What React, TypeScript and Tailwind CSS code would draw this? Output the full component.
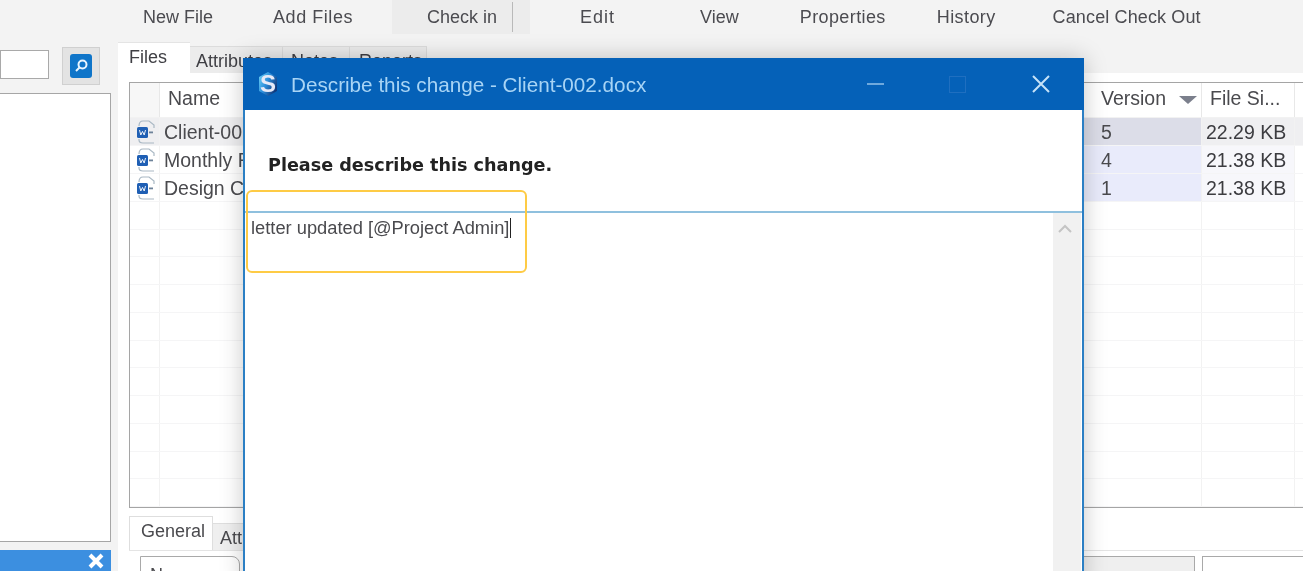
import React from "react";

const toolbar = [
  { label: "New File", cls: "ml-[143px]" },
  { label: "Add Files", cls: "ml-[60px] tracking-[0.55px]" },
  { label: "Edit", cls: "ml-[50px] tracking-[1px]" },
  { label: "View", cls: "ml-[85px]" },
  { label: "Properties", cls: "ml-[61px] tracking-[0.4px]" },
  { label: "History", cls: "ml-[51px] tracking-[0.4px]" },
  { label: "Cancel Check Out", cls: "ml-[57px] tracking-[0.13px]" },
];

const files = [
  { name: "Client-002.docx", version: "5", size: "22.29 KB" },
  { name: "Monthly Report.docx", version: "4", size: "21.38 KB" },
  { name: "Design Contract.docx", version: "1", size: "21.38 KB" },
];

function WordIcon() {
  return (
    <svg width="20" height="24" viewBox="0 0 20 24" className="ml-[5px] shrink-0">
      <path d="M4 6Q4 1 8 1H14L19 5V8" fill="none" stroke="#a9b8c4" strokeWidth="1.2" />
      <path d="M4 19V20Q4 23 8 23H19" fill="none" stroke="#a9b8c4" strokeWidth="1.2" />
      <rect x="2" y="7" width="11" height="11" rx="1.5" fill="#1f5fb4" />
      <path d="M4.5 10l1.3 5 1.7-3.6 1.7 3.6 1.3-5" fill="none" stroke="#fff" strokeWidth="0.9" />
      <rect x="14" y="11.5" width="4" height="1.8" fill="#6d8299" />
    </svg>
  );
}

function Logo() {
  return (
    <div className="relative flex h-[28px] w-[22px] shrink-0 items-center justify-center">
      <svg width="22" height="28" viewBox="0 0 22 28" className="absolute inset-0">
        <defs>
          <linearGradient id="lg" x1="0" y1="0" x2="1" y2="0.6">
            <stop offset="0" stopColor="#6fd6f7" />
            <stop offset="0.5" stopColor="#2d8fdc" />
            <stop offset="1" stopColor="#123a7c" />
          </linearGradient>
        </defs>
        <path d="M11 2l9 5v14l-9 5-9-5V7z" fill="url(#lg)" />
      </svg>
      <span className="relative text-[24px] font-bold leading-none text-[#e6e9f7]">S</span>
    </div>
  );
}

function Row({ file, index }: { file?: (typeof files)[number]; index: number }) {
  const first = index === 0;
  return (
    <div className={`flex h-[28px] border-b border-[#f5f5f6] text-[19.5px] leading-[29px] ${first ? "bg-[#efeff1]" : ""}`}>
      <div className="flex w-[30px] shrink-0 items-center border-r border-[#f2f2f2]">{file && <WordIcon />}</div>
      <div className="min-w-0 flex-1 overflow-hidden whitespace-nowrap pl-[4px] text-[#4a4a4e]">
        {file?.name}
      </div>
      <div
        className={`w-[118px] shrink-0 border-r border-[#f2f2f2] pl-[17px] text-[#4a4a4e] ${
          file ? (first ? "bg-[#dcdde8]" : "bg-[#e9ebfb]") : ""
        }`}
      >
        {file?.version}
      </div>
      <div
        className={`w-[93px] shrink-0 border-r border-[#f2f2f2] pl-[4px] text-[#3c3c40] ${
          file && !first ? "bg-[#f7f7fb]" : ""
        }`}
      >
        {file?.size}
      </div>
      <div className="w-[8px] shrink-0" />
    </div>
  );
}

export default function App() {
  return (
    <div className="relative h-[571px] w-[1303px] overflow-hidden bg-[#f3f3f3] font-['Liberation_Sans',Arial,sans-serif] blur-[0.5px]">
      {/* Toolbar */}
      <div className="flex h-[38px] items-center pb-[4px] text-[18px] text-[#4b4b50]">
        <span className={toolbar[0].cls}>{toolbar[0].label}</span>
        <span className={toolbar[1].cls}>{toolbar[1].label}</span>
        <div className="ml-[39px] flex h-[34px] w-[138px] items-center bg-[#ececec] pl-[35px]">
          <span>Check in</span>
          <span className="ml-[15px] h-[30px] w-px bg-[#b9b9b9]" />
        </div>
        {toolbar.slice(2).map((t) => (
          <span key={t.label} className={t.cls}>
            {t.label}
          </span>
        ))}
      </div>

      <div className="flex h-[533px]">
        {/* Left pane */}
        <div className="flex w-[118px] shrink-0 flex-col pr-[7px]">
          <div className="flex h-[55px] shrink-0 items-start pt-[9px]">
            <div className="mt-[3px] h-[29px] w-[49px] border border-[#a9a9a9] bg-white" />
            <div className="ml-[13px] flex h-[38px] w-[38px] items-center justify-center border border-[#d0d0d0] bg-[#e3e3e3]">
              <div className="flex h-[24px] w-[22px] items-center justify-center rounded-[3px] bg-[#0f75c9]">
                <svg width="16" height="16" viewBox="0 0 16 16" fill="none" stroke="#e8f5ff" strokeWidth="2">
                  <circle cx="9.5" cy="6.5" r="4" />
                  <path d="M6.5 9.5L3 13" />
                </svg>
              </div>
            </div>
          </div>
          <div className="h-[449px] shrink-0 border border-l-0 border-[#a6a6a6] bg-white" />
          <div className="mt-[8px] flex flex-1 items-start justify-end bg-[#3c8fe0] pr-[6px] pt-[2px]">
            <svg width="18" height="18" viewBox="0 0 18 18" stroke="#fff" strokeWidth="4">
              <path d="M3 3l12 12M15 3L3 15" />
            </svg>
          </div>
        </div>

        {/* Right pane */}
        <div className="flex min-w-0 flex-1 flex-col">
          <div className="flex h-[35px] shrink-0 items-end text-[18px] text-[#3f3f44]">
            <div className="h-[31px] w-[72px] border-t border-[#e4e4e4] bg-white pl-[11px] leading-[28px]">Files</div>
            <div className="h-[27px] w-[93px] border-t border-r border-[#dcdcdc] bg-[#ececec] pl-[6px] leading-[29px]">Attributes</div>
            <div className="h-[27px] w-[67px] border-t border-r border-[#dcdcdc] bg-[#ececec] pl-[8px] leading-[29px]">Notes</div>
            <div className="h-[27px] w-[77px] border-t border-r border-[#dcdcdc] bg-[#ececec] pl-[9px] leading-[29px]">Reports</div>
          </div>
          <div className="flex-1 overflow-hidden bg-white pl-[11px] pt-[9px]">
            <div className="flex h-[426px] flex-col overflow-hidden border border-r-0 border-[#a5a5a5] bg-white">
              <div className="flex h-[35px] shrink-0 border-b border-[#f2f2f2] text-[19.5px] leading-[30px] text-[#4a4a4e]">
                <div className="w-[30px] shrink-0 border-r border-[#e8e8e8] bg-[#f7f7f7]" />
                <div className="flex-1 pl-[8px]">Name</div>
                <div className="flex w-[118px] shrink-0 items-center border-r border-[#e8e8e8] pb-[4px] pl-[17px]">
                  Version
                  <svg width="18" height="8" viewBox="0 0 18 8" className="ml-[13px] mt-[3px]">
                    <path d="M0 0h18L9 8z" fill="#7b7f8c" />
                  </svg>
                </div>
                <div className="w-[93px] shrink-0 border-r border-[#e8e8e8] pl-[8px]">File Si...</div>
                <div className="w-[8px] shrink-0" />
              </div>
              {Array.from({ length: 14 }).map((_, i) => (
                <Row key={i} index={i} file={files[i]} />
              ))}
            </div>
            <div className="mt-[8px] flex h-[34px] items-end text-[18px] text-[#4a4a4e]">
              <div className="h-[34px] w-[84px] border-t border-l border-r border-[#dedede] bg-white pl-[11px] leading-[28px]">General</div>
              <div className="h-[27px] w-[80px] border-t border-r border-[#dedede] bg-[#efefef] pl-[7px] leading-[28px]">Attributes</div>
            </div>
            <div className="flex items-start border-t border-[#e4e4e4] pl-[11px] pt-[5px]">
              <div className="h-[30px] w-[100px] rounded-tr-[8px] border border-[#a9a9a9] bg-white pl-[9px] text-[18px] leading-[36px] text-[#4a4a4e]">Name</div>
              <div className="ml-auto flex h-[30px] w-[113px] items-end justify-end border border-[#a9a9a9] bg-[#efefef] pr-[15px]">
                <span className="h-[3px] w-[6px] rounded-t-full bg-[#333]" />
              </div>
              <div className="ml-[7px] h-[30px] w-[101px] border border-r-0 border-[#a9a9a9] bg-white" />
            </div>
          </div>
        </div>
      </div>

      {/* Dialog */}
      <div className="absolute left-[243px] top-[58px] flex h-[530px] w-[841px] flex-col border-x-2 border-[#2b7fc4] bg-white shadow-[0_0_22px_rgba(0,0,0,0.22)]">
        <div className="-mx-[2px] flex h-[52px] shrink-0 items-center bg-[#0561b8] pl-[14px] text-[#a8d4f5]">
          <Logo />
          <span className="ml-[12px] pt-[1px] text-[20.7px]">Describe this change - Client-002.docx</span>
          <span className="ml-auto h-[2px] w-[17px] bg-[#6fa9dd]" />
          <span className="ml-[65px] h-[17px] w-[17px] border border-[#1f6fc0]" />
          <svg width="18" height="18" viewBox="0 0 18 18" stroke="#c6e2f8" strokeWidth="2" className="ml-[66px] mr-[34px]">
            <path d="M1 1l16 16M17 1L1 17" />
          </svg>
        </div>
        <div className="flex h-[103px] shrink-0 items-start border-b-2 border-[#8fc0de] pl-[23px] pt-[43px]">
          <span className="font-['DejaVu_Sans',sans-serif] text-[17.6px] font-bold leading-[24px] text-[#222]">
            Please describe this change.
          </span>
        </div>
        <div className="flex flex-1">
          <div className="flex-1 pl-[6px] pt-[1px] text-[18.3px] leading-[24px] text-[#4a4a4e]">
            letter updated [@Project Admin]<span className="ml-px inline-block h-[20px] w-px translate-y-[4px] bg-[#222]" />
          </div>
          <div className="flex w-[28px] shrink-0 justify-center bg-[#f1f1f1] pr-[4px] pt-[11px]">
            <svg width="14" height="9" viewBox="0 0 14 9" fill="none" stroke="#c4c4c4" strokeWidth="2">
              <path d="M1 8l6-6 6 6" />
            </svg>
          </div>
          <div className="w-px" />
        </div>
      </div>

      {/* Highlight callout */}
      <div className="absolute left-[246px] top-[190px] h-[83px] w-[281px] rounded-[6px] border-2 border-[#fecb45]" />
    </div>
  );
}
